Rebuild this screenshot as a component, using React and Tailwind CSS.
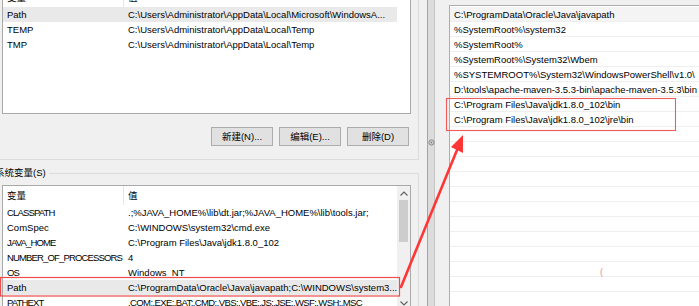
import React from "react";

const userVars = [
  { name: "Path", value: String.raw`C:\Users\Administrator\AppData\Local\Microsoft\WindowsA...`, selected: true },
  { name: "TEMP", value: String.raw`C:\Users\Administrator\AppData\Local\Temp` },
  { name: "TMP", value: String.raw`C:\Users\Administrator\AppData\Local\Temp` },
];

const systemVars = [
  { name: "CLASSPATH", caps: true, value: String.raw`.;%JAVA_HOME%\lib\dt.jar;%JAVA_HOME%\lib\tools.jar;` },
  { name: "ComSpec", value: String.raw`C:\WINDOWS\system32\cmd.exe` },
  { name: "JAVA_HOME", caps: true, value: String.raw`C:\Program Files\Java\jdk1.8.0_102` },
  { name: "NUMBER_OF_PROCESSORS", caps: true, value: "4" },
  { name: "OS", caps: true, value: "Windows_NT" },
  { name: "Path", value: String.raw`C:\ProgramData\Oracle\Java\javapath;C:\WINDOWS\system3...`, selected: true },
  { name: "PATHEXT", caps: true, value: ".COM;.EXE;.BAT;.CMD;.VBS;.VBE;.JS;.JSE;.WSF;.WSH;.MSC", capsValue: true },
];

const pathEntries = [
  "C:\\ProgramData\\Oracle\\Java\\javapath",
  "%SystemRoot%\\system32",
  "%SystemRoot%",
  "%SystemRoot%\\System32\\Wbem",
  "%SYSTEMROOT%\\System32\\WindowsPowerShell\\v1.0\\",
  "D:\\tools\\apache-maven-3.5.3-bin\\apache-maven-3.5.3\\bin",
  "C:\\Program Files\\Java\\jdk1.8.0_102\\bin",
  "C:\\Program Files\\Java\\jdk1.8.0_102\\jre\\bin",
];

const ListHeader = () => (
  <div className="flex h-[19px] w-[394px]">
    <div className="flex w-[121px] items-center border-r border-[#e5e5e5] pl-[4px]">变量</div>
    <div className="flex items-center pl-[4px]">值</div>
  </div>
);

const VarRow = ({ row }) => (
  <div className={`flex h-[15px] w-[394px] items-center leading-[14px] ${row.selected ? "bg-[#e9e9e9]" : ""}`}>
    <div className={`w-[121px] shrink-0 whitespace-nowrap pl-[4px] ${row.caps ? "tracking-[-0.85px]" : ""}`}>
      {row.name}
    </div>
    <div className={`min-w-0 flex-1 overflow-hidden whitespace-nowrap pl-[4px] ${row.capsValue ? "tracking-[-0.6px]" : ""}`}>
      {row.value}
    </div>
  </div>
);

const Chevron = ({ up }) => (
  <svg width="8" height="5" viewBox="0 0 8 5" aria-hidden="true">
    <polyline
      points={up ? "0.5,4.5 4,1 7.5,4.5" : "0.5,0.5 4,4 7.5,0.5"}
      fill="none"
      stroke="#606060"
      strokeWidth="1.1"
    />
  </svg>
);

const Button = ({ children }) => (
  <button className="h-[19px] w-[62px] border border-[#adadad] bg-[#e1e1e1] text-[9.5px] text-black">
    {children}
  </button>
);

const LeftDialog = () => (
  <div className="flex w-[419px] shrink-0 flex-col">
    {/* 用户变量 group */}
    <section className="h-[160px] shrink-0 border-b border-r border-[#dcdcdc]">
      <div className="ml-[2px] h-[114px] w-[409px] overflow-hidden border-x border-b border-[#a9a9a9] bg-white">
        <div className="-mt-[12px]">
          <ListHeader />
          {userVars.map((row) => (
            <VarRow key={row.name} row={row} />
          ))}
        </div>
      </div>
      <div className="mt-[13px] flex justify-end gap-[6px] pr-[9px]">
        <Button>新建(N)...</Button>
        <Button>编辑(E)...</Button>
        <Button>删除(D)</Button>
      </div>
    </section>

    {/* 系统变量 group */}
    <section className="mt-[7px] flex shrink-0 flex-col">
      <div className="flex h-[12px] items-center">
        <span className="-ml-[5px] whitespace-nowrap pr-[3px]">系统变量(S)</span>
        <div className="h-[6px] flex-1 self-end border-r border-t border-[#dcdcdc]" />
      </div>
      <div className="border-r border-[#dcdcdc] pt-[6px]">
        <div className="ml-[2px] flex h-[126px] w-[409px] border border-[#a9a9a9] bg-white">
          <div className="flex-1">
            <ListHeader />
            {systemVars.map((row) => (
              <VarRow key={row.name} row={row} />
            ))}
          </div>
          <div className="flex w-[14px] flex-col bg-[#f0f0f0]">
            <div className="flex h-[14px] items-center justify-center">
              <Chevron up />
            </div>
            <div className="mx-[2px] h-[42px] bg-[#cdcdcd]" />
            <div className="flex-1" />
            <div className="flex h-[14px] items-center justify-center">
              <Chevron />
            </div>
          </div>
        </div>
      </div>
    </section>
  </div>
);

const Splitter = () => (
  <div className="flex w-[8px] shrink-0 flex-col items-center border-l border-r border-l-[#a3a3a3] border-r-[#c4c4c4] bg-[#dcdcdc]">
    <svg className="mt-[139px]" width="7" height="7" viewBox="0 0 7 7" aria-hidden="true">
      <circle cx="3.5" cy="3.5" r="2.6" fill="none" stroke="#7a7a7a" strokeWidth="0.9" />
      <circle cx="3.5" cy="3.5" r="1" fill="#7a7a7a" />
    </svg>
  </div>
);

const PathEditor = () => {
  const rows = [...pathEntries, ...Array(14).fill("")];
  return (
    <div className="flex-1 pl-[14px] pt-[5px]">
      <div className="h-full border-l border-t border-[#adadad] bg-white pt-[1px]">
        {rows.map((entry, index) => (
          <div
            key={index}
            className={`flex h-[15px] items-center whitespace-nowrap border-b border-[#efefef] pl-[4px] pt-[1px] ${index === 0 ? "bg-[#f4f4f4]" : ""}`}
          >
            {entry}
          </div>
        ))}
      </div>
    </div>
  );
};

export default function App() {
  return (
    <div className="relative flex h-[306px] w-[699px] overflow-hidden bg-[#f0f0f0] font-['Liberation_Sans','Noto_Sans_CJK_SC',sans-serif] text-[9.5px] leading-none text-black">
      <LeftDialog />
      <div className="w-[8px] shrink-0" />
      <Splitter />
      <PathEditor />

      {/* annotation overlay */}
      <svg
        className="pointer-events-none absolute inset-0"
        width="699"
        height="306"
        viewBox="0 0 699 306"
        aria-hidden="true"
      >
        <rect x="0.5" y="277.5" width="399" height="18.5" fill="none" stroke="#ef4c4c" strokeWidth="1.2" />
        <rect x="446.5" y="98.5" width="229" height="32" fill="none" stroke="#ef5a5a" strokeWidth="1.1" />
        <line x1="401" y1="287" x2="457" y2="150" stroke="#ff3636" strokeWidth="2.6" strokeLinecap="round" />
        <polygon points="463,135 451,147 463,153" fill="#ff3636" />
      </svg>
      <span className="pointer-events-none absolute left-[600px] top-[268px] text-[9px] text-[#f08a8a]">(</span>
    </div>
  );
}
